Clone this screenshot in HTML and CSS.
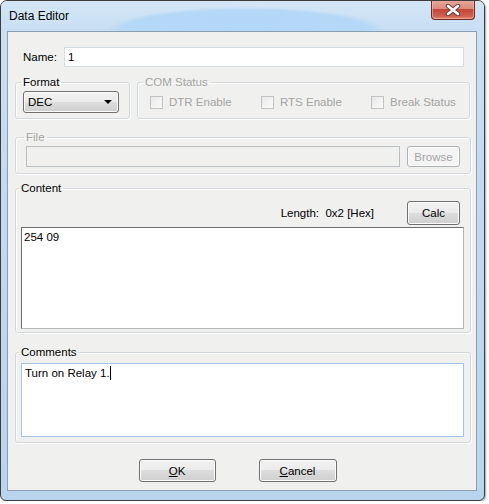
FILE: index.html
```html
<!DOCTYPE html>
<html lang="en">
<head>
    <meta charset="UTF-8">
    <title>Data Editor</title>
    <link rel="stylesheet" href="styles.css">
</head>
<body>
    <div class="window">
        <div class="titlebar">
            <span class="title">Data Editor</span>
            <div class="close-btn">
                <svg width="16" height="12" viewBox="0 0 16 12">
                    <path d="M3 2 L13 10 M13 2 L3 10" stroke="#6b4040" stroke-width="4.5" stroke-linecap="round"/>
                    <path d="M3 2 L13 10 M13 2 L3 10" stroke="#fff" stroke-width="2.5" stroke-linecap="round"/>
                </svg>
            </div>
        </div>

        <div class="client">
            <div class="name-row">
                <label class="name-label">Name:</label>
                <div class="textbox name-input">1</div>
            </div>

            <div class="top-row">
                <fieldset class="group format-group">
                    <legend>Format</legend>
                    <div class="dropdown">
                        <span>DEC</span>
                        <span class="arrow"></span>
                    </div>
                </fieldset>

                <fieldset class="group com-group disabled">
                    <legend>COM Status</legend>
                    <div class="check-row">
                        <label class="check dtr"><span class="box"></span>DTR Enable</label>
                        <label class="check rts"><span class="box"></span>RTS Enable</label>
                        <label class="check"><span class="box"></span>Break Status</label>
                    </div>
                </fieldset>
            </div>

            <fieldset class="group file-group disabled">
                <legend>File</legend>
                <div class="file-row">
                    <div class="textbox file-input"></div>
                    <div class="btn btn-disabled">Browse</div>
                </div>
            </fieldset>

            <fieldset class="group content-group">
                <legend>Content</legend>
                <div class="length-row">
                    <span class="length">Length:&nbsp; 0x2 [Hex]</span>
                    <div class="btn calc-btn">Calc</div>
                </div>
                <div class="memo content-memo">254 09</div>
            </fieldset>

            <fieldset class="group comments-group">
                <legend>Comments</legend>
                <div class="memo comments-memo">Turn on Relay 1.<span class="caret"></span></div>
            </fieldset>

            <div class="button-row">
                <div class="btn dialog-btn ok-btn"><u>O</u>K</div>
                <div class="btn dialog-btn cancel-btn"><u>C</u>ancel</div>
            </div>
        </div>
    </div>
</body>
</html>
```

FILE: styles.css
```css
* {
    margin: 0;
    padding: 0;
    box-sizing: border-box;
}

body {
    font-family: 'Liberation Sans', Arial, sans-serif;
    font-size: 11.5px;
    color: #000;
    background: #fff;
}

.window {
    width: 485px;
    height: 501px;
    border: 1px solid #3c3c3c;
    border-radius: 7px 7px 6px 6px;
    background: linear-gradient(#cbe1f5, #c2daf1 40%, #b9d4ee);
    box-shadow: 1px 1px 2px rgba(0, 0, 0, 0.35);
    overflow: hidden;
}

.titlebar {
    height: 30px;
    display: flex;
    justify-content: space-between;
    align-items: flex-start;
    padding-left: 8px;
    background: radial-gradient(ellipse 140px 24px at 245px 30px, #b3d7f8 0%, #b5d8f7 88%, transparent 100%),
                linear-gradient(#d3e6f7, #c8def3);
}

.title {
    line-height: 30px;
    font-size: 12px;
    color: #000;
    text-shadow: 0 0 6px #e6f1fb;
}

.close-btn {
    width: 44px;
    height: 20px;
    margin-right: 9px;
    margin-top: -1px;
    border: 1px solid #6e2a24;
    border-top: none;
    border-radius: 0 0 4px 4px;
    background: linear-gradient(#e9a99c, #dc8a7a 45%, #c4483a 50%, #d0604f 85%, #e08a6e);
    box-shadow: inset 0 0 0 1px rgba(255, 200, 190, 0.5);
    display: flex;
    align-items: center;
    justify-content: center;
}

.client {
    width: 470px;
    height: 460px;
    margin-left: 6px;
    border: 1px solid #8b9fb2;
    background: #f0f0ee;
    padding: 0 5px 0 7px;
}

.name-row {
    display: flex;
    align-items: center;
    margin-top: 15px;
    padding-left: 8px;
}

.name-label {
    width: 41px;
}

.textbox {
    height: 20px;
    border: 1px solid #d5dde4;
    background: #fff;
    padding: 2px 3px;
    line-height: 14px;
}

.name-input {
    width: 400px;
}

.group {
    border: 1px solid #d2d8dc;
    border-radius: 3px;
    box-shadow: inset 1px 1px 0 #fff, 1px 1px 0 #fff;
    padding: 2px 7px 5px;
    min-width: 0;
}

.group legend {
    line-height: 14px;
    padding: 0 2px;
    margin-left: -2px;
}

.disabled legend,
.disabled .check {
    color: #a4a4a4;
}

.top-row {
    display: flex;
    gap: 7px;
    margin-top: 8px;
}

.format-group {
    width: 115px;
}

.com-group {
    width: 333px;
}

.dropdown {
    width: 96px;
    height: 22px;
    border: 1px solid #707070;
    border-radius: 3px;
    background: linear-gradient(#f2f2f2, #ebebeb 50%, #dddddd 50%, #cfcfcf);
    box-shadow: inset 0 0 0 1px #fbfbfb;
    display: flex;
    align-items: center;
    justify-content: space-between;
    padding: 0 6px 0 4px;
}

.arrow {
    width: 0;
    height: 0;
    border-left: 4px solid transparent;
    border-right: 4px solid transparent;
    border-top: 4px solid #000;
}

.check-row {
    display: flex;
    height: 22px;
    align-items: center;
    padding-left: 5px;
}

.check {
    display: flex;
    align-items: center;
    gap: 6px;
}

.check.dtr {
    width: 111px;
}

.check.rts {
    width: 110px;
}

.box {
    width: 13px;
    height: 13px;
    border: 1px solid #c2c2c2;
    background: linear-gradient(135deg, #e8e8e8, #fbfbfb);
}

.file-group {
    margin-top: 11px;
    padding: 2px 10px 6px;
}

.file-row {
    display: flex;
    gap: 7px;
}

.file-input {
    width: 374px;
    height: 21px;
    border-color: #b9bec2;
    background: #f0f0ee;
}

.btn {
    width: 53px;
    height: 21px;
    border: 1px solid #707070;
    border-radius: 3px;
    background: linear-gradient(#f2f2f2, #ebebeb 50%, #dddddd 50%, #cfcfcf);
    box-shadow: inset 0 0 0 1px #fcfcfc;
    display: flex;
    align-items: center;
    justify-content: center;
}

.btn-disabled {
    border-color: #adb2b5;
    background: #f4f4f4;
    color: #a4a4a4;
}

.content-group {
    margin-top: 7px;
    padding: 6px 6px 3px 5px;
}

.length-row {
    display: flex;
    justify-content: flex-end;
    align-items: center;
    padding-right: 4px;
}

.length {
    margin-right: 33px;
}

.calc-btn {
    height: 24px;
}

.memo {
    background: #fff;
    padding: 2px 2px;
    line-height: 15px;
}

.content-memo {
    margin-top: 2px;
    height: 102px;
    border: 1px solid #b5b8bb;
    border-top-color: #6f6f6f;
    border-left-color: #6f6f6f;
}

.comments-group {
    margin-top: 12px;
    padding: 4px 6px 5px 5px;
}

.comments-memo {
    height: 74px;
    border: 1px solid #a6c4e2;
    padding-left: 3px;
}

.caret {
    display: inline-block;
    width: 1px;
    height: 14px;
    background: #000;
    vertical-align: -3px;
}

.button-row {
    display: flex;
    justify-content: center;
    gap: 43px;
    margin-top: 16px;
    padding-right: 11px;
}

.dialog-btn {
    height: 23px;
}

.ok-btn {
    width: 77px;
}

.cancel-btn {
    width: 78px;
}
```
